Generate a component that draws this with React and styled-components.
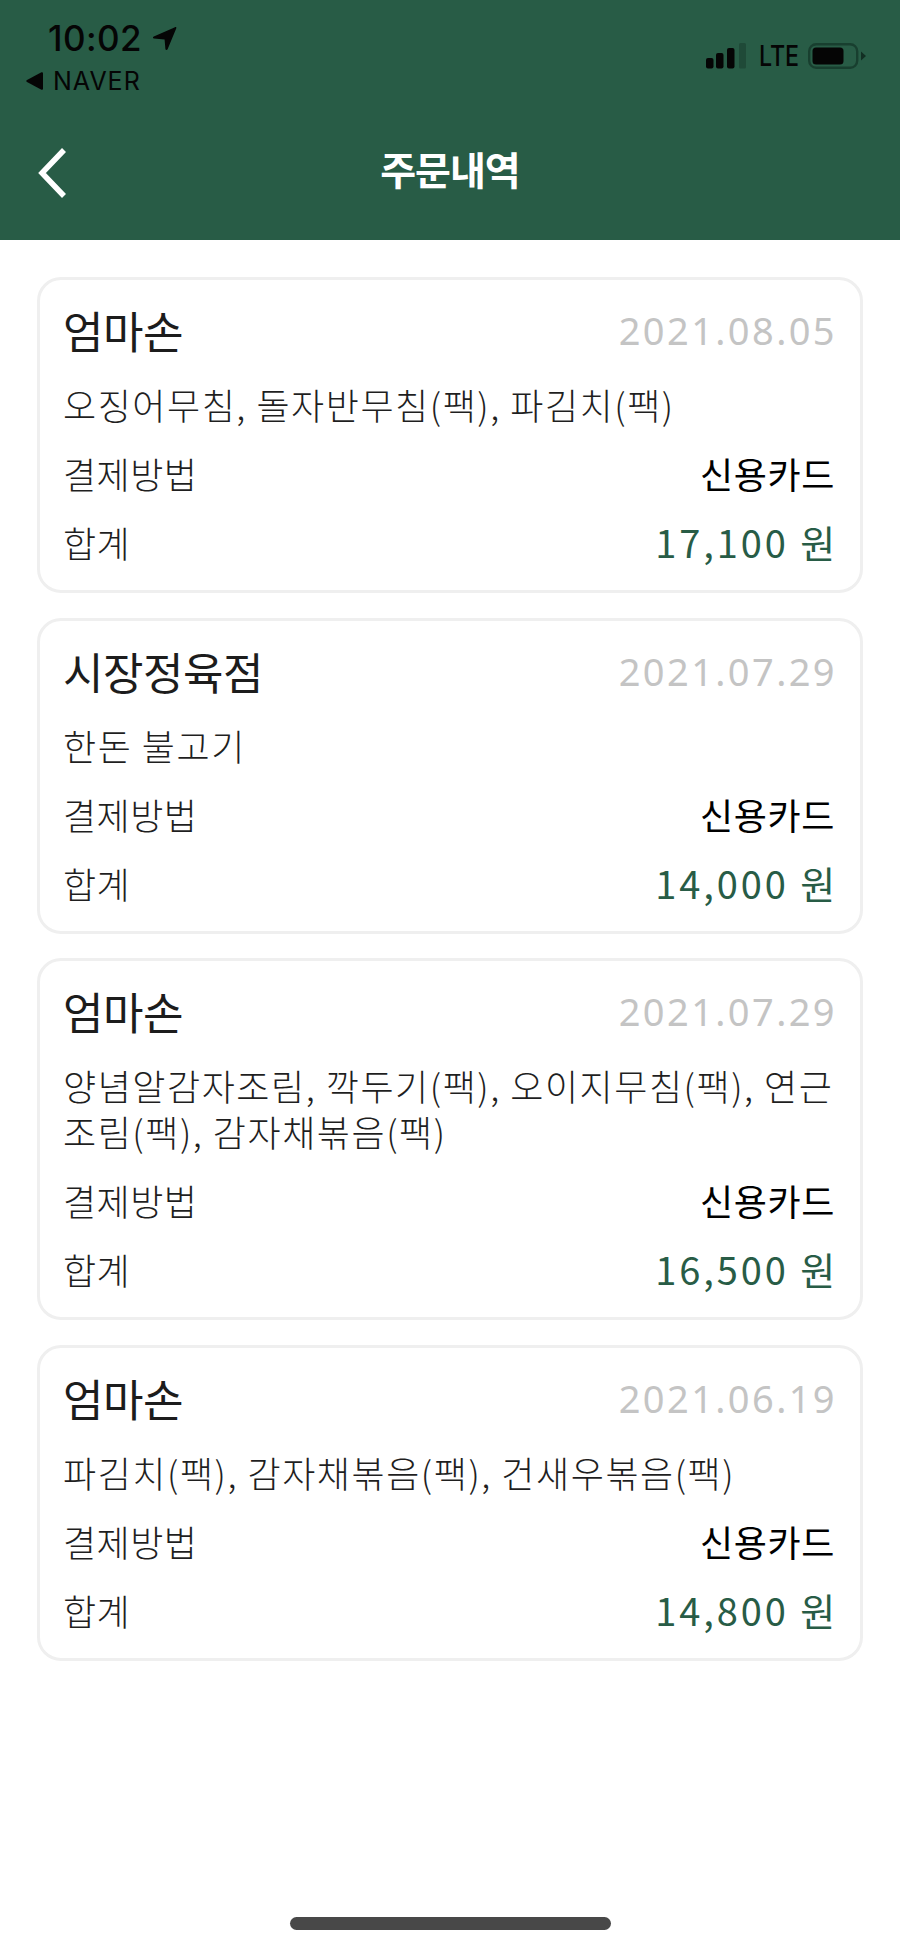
import React from "react";
import styled, { createGlobalStyle } from "styled-components";

const Global = createGlobalStyle`
  html, body { margin: 0; padding: 0; background: #fff; }
  body { font-family: "Noto Sans CJK KR", "Noto Sans", sans-serif; color: #1c1c1c; }
`;

const Page = styled.div`
  width: 900px;
  height: 1949px;
  display: flex;
  flex-direction: column;
  background: #fff;
  overflow: hidden;
`;

const Header = styled.header`
  height: 240px;
  flex: none;
  background: #285c46;
  display: flex;
  flex-direction: column;
`;

const StatusBar = styled.div`
  height: 120px;
  display: flex;
  justify-content: space-between;
  align-items: flex-start;
  padding: 20px 34px 0 26px;
  box-sizing: border-box;
`;

const StatusLeft = styled.div`
  display: flex;
  flex-direction: column;
  gap: 12px;
`;

const TimeRow = styled.div`
  display: flex;
  align-items: center;
  gap: 10px;
  padding-left: 22px;
  font-family: Inter, sans-serif;
  font-weight: 500;
  font-size: 35px;
  line-height: 36px;
  color: #050505;
  letter-spacing: 0.4px;
`;

const BackRow = styled.div`
  display: flex;
  align-items: center;
  gap: 10px;
  font-family: Inter, sans-serif;
  font-weight: 400;
  font-size: 25px;
  line-height: 26px;
  letter-spacing: 1px;
  color: #050505;
`;

const StatusRight = styled.div`
  display: flex;
  align-items: center;
  gap: 11px;
  margin-top: 22px;
`;

const Network = styled.span`
  display: block;
  width: 40px;
  margin-left: -2px;
  margin-right: 2px;
  text-align: center;
  font-family: Inter, sans-serif;
  font-weight: 500;
  font-size: 29px;
  line-height: 28px;
  color: #050505;
  transform: scaleX(0.8);
`;

const NavBar = styled.div`
  flex: 1;
  display: flex;
  align-items: center;
  justify-content: center;
  position: relative;
  padding-bottom: 24px;
`;

const BackButton = styled.svg`
  position: absolute;
  left: 37px;
  top: 27px;
`;

const Title = styled.h1`
  margin: 0;
  font-size: 39px;
  font-weight: 700;
  line-height: 50px;
  color: #fff;
  letter-spacing: -1px;
`;

const List = styled.main`
  flex: 1;
  display: flex;
  flex-direction: column;
  gap: 24.5px;
  padding: 37px 37px 0;
`;

const Card = styled.section`
  box-sizing: border-box;
  border: 3px solid #efefef;
  border-radius: 24px;
  padding: 21px 25px 25px 23px;
  display: flex;
  flex-direction: column;
  gap: 23px;
`;

const TitleRow = styled.div`
  display: flex;
  justify-content: space-between;
  align-items: center;
  height: 58px;
  margin-bottom: -1px;
`;

const Shop = styled.h2`
  margin: 0;
  font-size: 44px;
  font-weight: 400;
  line-height: 58px;
  letter-spacing: -0.5px;
  color: #1c1c1c;
`;

const DateText = styled.span`
  font-family: "Noto Sans", sans-serif;
  font-size: 38px;
  font-weight: 400;
  letter-spacing: 2.4px;
  margin-right: -2px;
  color: #c4c4c4;
`;

const Items = styled.p`
  margin: 0;
  font-size: 36px;
  font-weight: 300;
  line-height: 46px;
  letter-spacing: 1.55px;
  color: #1f1f1f;
  word-break: keep-all;
`;

const Row = styled.div`
  display: flex;
  justify-content: space-between;
  align-items: center;
  height: 46px;
`;

const Label = styled.span`
  font-size: 36px;
  line-height: 46px;
  font-weight: 300;
  letter-spacing: 0.5px;
  color: #1f1f1f;
`;

const Method = styled.span`
  font-size: 36px;
  line-height: 46px;
  font-weight: 400;
  letter-spacing: 0.6px;
  color: #000;
`;

const Amount = styled.span`
  font-size: 38px;
  line-height: 46px;
  font-weight: 400;
  letter-spacing: 2.9px;
  margin-right: -3px;
  color: #285c46;
`;

const HomeRow = styled.div`
  display: flex;
  justify-content: center;
  padding-bottom: 19px;
  flex: none;
`;

const HomeBar = styled.div`
  width: 321px;
  height: 13px;
  border-radius: 7px;
  background: #484848;
`;

const orders = [
  { shop: "엄마손", date: "2021.08.05", items: "오징어무침, 돌자반무침(팩), 파김치(팩)", total: "17,100 원" },
  { shop: "시장정육점", date: "2021.07.29", items: "한돈 불고기", total: "14,000 원" },
  { shop: "엄마손", date: "2021.07.29", items: "양념알감자조림, 깍두기(팩), 오이지무침(팩), 연근 조림(팩), 감자채볶음(팩)", total: "16,500 원" },
  { shop: "엄마손", date: "2021.06.19", items: "파김치(팩), 감자채볶음(팩), 건새우볶음(팩)", total: "14,800 원" },
];

const LocationArrow = () => (
  <svg width="25" height="25" viewBox="0 0 25 25">
    <path
      d="M23 1.2 C24 .8 24.6 1.4 24.2 2.4 L15.6 23.2 C15 24.4 13.6 24.2 13.4 23 L12.6 13.4 L2 12.6 C.8 12.4 .6 11 1.8 10.4 Z"
      fill="#050505"
    />
  </svg>
);

const BackTriangle = () => (
  <svg width="17" height="18" viewBox="0 0 17 18">
    <path d="M17 1.5 V16.5 C17 17.6 16 18 15 17.5 L1 10 C0 9.4 0 8.6 1 8 L15 .5 C16 0 17 .4 17 1.5 Z" fill="#050505" />
  </svg>
);

const Signal = () => (
  <svg width="40" height="26" viewBox="0 0 40 26">
    <rect x="0" y="15" width="7.5" height="10.5" rx="2" fill="#050505" />
    <rect x="10" y="10" width="7.5" height="15.5" rx="2" fill="#050505" />
    <rect x="21" y="5" width="7.5" height="20.5" rx="2" fill="#050505" />
    <rect x="33" y="0" width="7" height="25.5" rx="1.5" fill="#1f4a38" />
  </svg>
);

const Battery = () => (
  <svg width="58" height="26" viewBox="0 0 58 26">
    <rect x="1.2" y="1.2" width="48" height="23.6" rx="7" fill="none" stroke="#183f2f" strokeWidth="2.4" />
    <rect x="4.5" y="4.5" width="31" height="17" rx="3.5" fill="#050505" />
    <path d="M53 8.5 L58 13 L53 17.5 Z" fill="#122f23" />
  </svg>
);

export default function App() {
  return (
    <Page>
      <Global />
      <Header>
        <StatusBar>
          <StatusLeft>
            <TimeRow>
              10:02
              <LocationArrow />
            </TimeRow>
            <BackRow>
              <BackTriangle />
              NAVER
            </BackRow>
          </StatusLeft>
          <StatusRight>
            <Signal />
            <Network>LTE</Network>
            <Battery />
          </StatusRight>
        </StatusBar>
        <NavBar>
          <BackButton width="32" height="52" viewBox="0 0 32 52">
            <path d="M27 3 L5 26 L27 49" fill="none" stroke="#fff" strokeWidth="5.5" />
          </BackButton>
          <Title>주문내역</Title>
        </NavBar>
      </Header>
      <List>
        {orders.map((o) => (
          <Card key={o.shop + o.date}>
            <TitleRow>
              <Shop>{o.shop}</Shop>
              <DateText>{o.date}</DateText>
            </TitleRow>
            <Items>{o.items}</Items>
            <Row>
              <Label>결제방법</Label>
              <Method>신용카드</Method>
            </Row>
            <Row>
              <Label>합계</Label>
              <Amount>{o.total}</Amount>
            </Row>
          </Card>
        ))}
      </List>
      <HomeRow>
        <HomeBar />
      </HomeRow>
    </Page>
  );
}
